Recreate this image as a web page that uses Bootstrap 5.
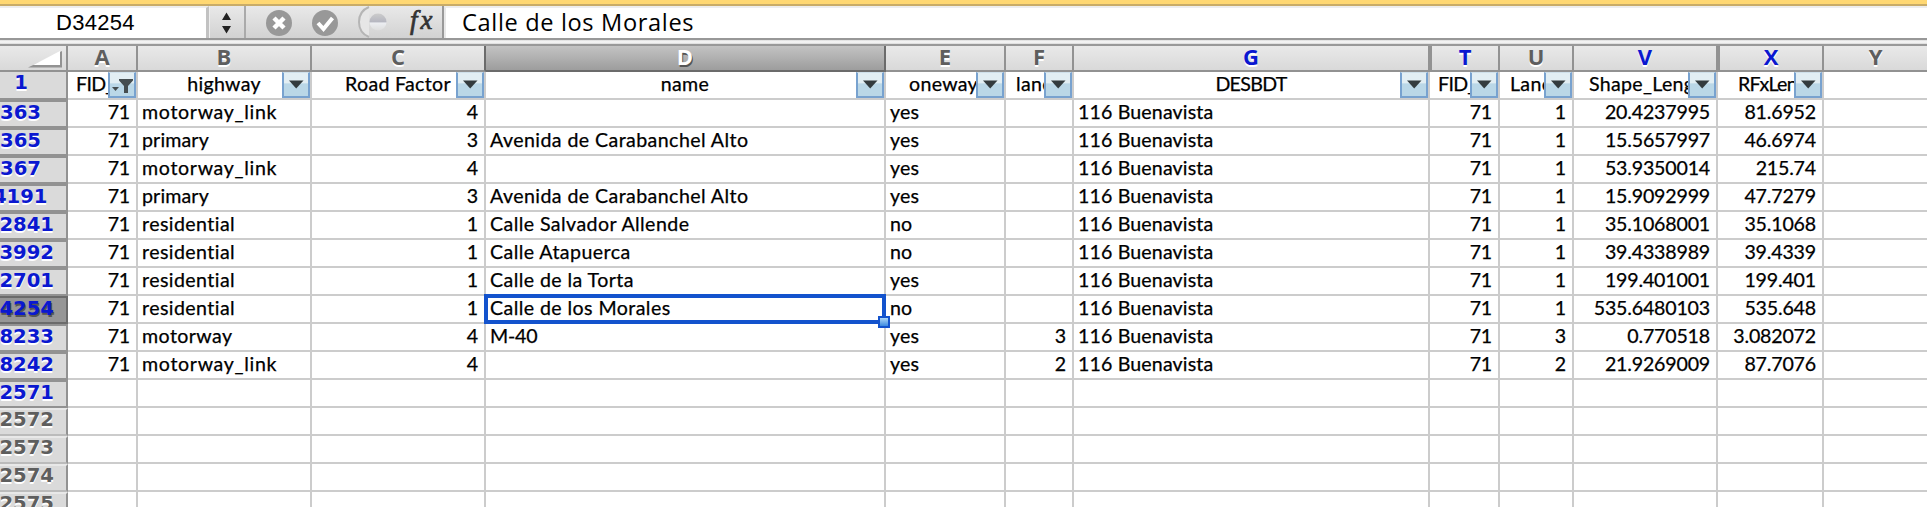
<!DOCTYPE html>
<html lang="en">
<head>
<meta charset="utf-8">
<title>Workbook</title>
<link href="https://cdn.jsdelivr.net/npm/bootstrap@5.3.0/dist/css/bootstrap.min.css" rel="stylesheet">
<style>
  body{width:1927px;height:507px;overflow:hidden;background:#fff;color:#000;font-family:Lato,sans-serif}
  .ribbon-edge{height:6px;background:#ffd873;border-bottom:2px solid #c9ac68}
  .formula-bar{height:34px;border-bottom:2px solid #989898;background:linear-gradient(#e9e9e9,#d2d2d2)}
  .name-box{width:209px;background:#fff;border-top:2px solid #eee;border-right:3px solid #c2c2c2;font:22px/30px "Liberation Sans",sans-serif;letter-spacing:.3px;padding-left:56px}
  .stepper{width:37px;border-right:2px solid #aaa;border-left:1px solid #eee}
  .tools{width:198px;border-right:2px solid #999}
  .formula{background:#fff;border-top:2px solid #eee;border-left:2px solid #e8e8e8;font:23.6px/28px "Open Sans",sans-serif;letter-spacing:.65px;padding-left:16px}
  .splitter{height:6px;background:linear-gradient(#dcdcdc,#fafafa 50%,#d8d8d8);border-bottom:2px solid #999}
  .sheet-row{display:grid;grid-template-columns:68px 70px 174px 174px 400px 120px 68px 356px 70px 74px 144px 106px 1fr;height:28px}
  .letters{height:26px}
  .letters>div{border-right:2px solid #929292;border-bottom:2px solid #929292;background:linear-gradient(#e9e9e9,#d9d9d9);text-align:center;font:bold 22px/20px "Open Sans",sans-serif;color:#5e5e5e;text-shadow:0 1.5px 0 #fff}
  .letters>div:last-child{border-right:0}
  .letters>.current{background:linear-gradient(#c3c3c3,#9d9d9d);color:#fff;text-shadow:1px 1.5px 0 #555;border-color:#6b6b6b}
  .letters>.before-current{border-right-color:#6b6b6b}
  .letters>.filtered,.row-no.filtered{color:#0a18d0}
  .letters>.after-hidden{border-left:2px solid #929292}
  .row-no{background:#dadada;border-right:2px solid #929292;border-bottom:2px solid #929292;font:bold 19.6px/22px "DejaVu Sans",sans-serif;color:#5e5e5e;text-shadow:0 1.5px 0 #fff;overflow:hidden;white-space:nowrap}
  .row-no.folded{border-top:2px solid #929292}
  .row-no.plain{border-top:2px solid #e8e8e8;border-bottom-color:#bbb;line-height:20px}
  .row-no.current{background:#969696;border-color:#6b6b6b;text-shadow:1px 1.5px 0 #555}
  .grid-cell{border-right:2px solid #ccc;border-bottom:2px solid #ccc;font-size:19.6px;line-height:23px;padding:0 6px 0 4px;white-space:nowrap;letter-spacing:-.18px;position:relative;-webkit-text-stroke:.25px #000}
  .grid-cell:last-child{border-right:0}
  .spaced{letter-spacing:.42px}
  .spaced-more{letter-spacing:.68px}
  .spaced-less{letter-spacing:.14px}
  .title-cell{padding:0;text-align:center;overflow:hidden;letter-spacing:.3px}
  .tight{letter-spacing:-.7px}
  .filter-btn{position:absolute;right:0;top:0;width:28px;height:26px;padding:0;border:2px solid #78a2cf;border-top:1px solid #cfe0ea;border-radius:0;background:linear-gradient(#e2eef3 45%,#bad7e7 46%);line-height:0}
  .filter-btn svg{display:block}
  .selection{position:absolute;left:-2px;top:-2px;width:402px;height:30px;border:4px solid #1353cd;z-index:2}
  .selection i{position:absolute;right:-8px;bottom:-8px;width:12px;height:12px;border:2px solid #1353cd;background:linear-gradient(#acd6f6,#3c8be0)}
</style>
</head>
<body>
<div class="ribbon-edge"></div>
<div class="formula-bar d-flex">
  <div class="name-box flex-shrink-0">D34254</div>
  <div class="stepper flex-shrink-0">
    <svg width="34" height="32"><path d="M12 14l4.500-7.500 4.500 7.500zM12 20l4.500 7.500 4.500-7.500z" fill="#222"/></svg>
  </div>
  <div class="tools flex-shrink-0">
    <svg class="d-block" width="196" height="32">
      <defs><linearGradient id="orb" x2="0" y2="1"><stop offset="0" stop-color="#ccc"/><stop offset=".5" stop-color="#b5b6c0"/><stop offset=".55" stop-color="#eceef2"/><stop offset="1" stop-color="#ddd"/></linearGradient></defs>
      <circle cx="33" cy="17" r="13" fill="#989898"/><path d="M28 12l10 10M38 12L28 22" stroke="#fff" stroke-width="4.500"/>
      <circle cx="79" cy="17" r="13" fill="#989898"/><path d="M72 17l5.500 6 9-11" fill="none" stroke="#fff" stroke-width="4"/>
      <path d="M123 1q-10 4-10 15t10 15" fill="#e6e6e6" stroke="#b5b5b5" stroke-width="2"/>
      <circle cx="132" cy="16" r="8.500" fill="url(#orb)"/>
      <text x="164" y="23" font-family="Liberation Serif, serif" font-style="italic" font-size="27" fill="#333" stroke="#333" stroke-width=".7" letter-spacing="3">fx</text>
    </svg>
  </div>
  <div class="formula flex-grow-1">Calle de los Morales</div>
</div>
<div class="splitter"></div>
<main id="sheet"></main>
<script>
const letters = ['A','B','C','D','E','F','G','T','U','V','X','Y'];
// label, left offset of labels that run under their filter button, extra class
const titles = [['FID_',8,'tight'],['highway',0,'spaced'],['Road Factor'],['name'],['oneway',23,'spaced'],['lane',10,'spaced-more'],['DESBDT',0,'tight'],['FID_',8,'tight'],['Lane',10],['Shape_Leng',15,'spaced-more'],['RFxLen',20,'tight']];
const G = '116 Buenavista';
const rows = [
  ['363',71,'motorway_link',4,'','yes','',G,71,1,'20.4237995','81.6952'],
  ['365',71,'primary',3,'Avenida de Carabanchel Alto','yes','',G,71,1,'15.5657997','46.6974'],
  ['367',71,'motorway_link',4,'','yes','',G,71,1,'53.9350014','215.74'],
  ['4191',71,'primary',3,'Avenida de Carabanchel Alto','yes','',G,71,1,'15.9092999','47.7279'],
  ['2841',71,'residential',1,'Calle Salvador Allende','no','',G,71,1,'35.1068001','35.1068'],
  ['3992',71,'residential',1,'Calle Atapuerca','no','',G,71,1,'39.4338989','39.4339'],
  ['2701',71,'residential',1,'Calle de la Torta','yes','',G,71,1,'199.401001','199.401'],
  ['4254',71,'residential',1,'Calle de los Morales','no','',G,71,1,'535.6480103','535.648'],
  ['8233',71,'motorway',4,'M-40','yes',3,G,71,3,'0.770518','3.082072'],
  ['8242',71,'motorway_link',4,'','yes',2,G,71,2,'21.9269009','87.7076'],
  ['2571'],['2572'],['2573'],['2574'],['2575']
];
const textCols = {2: 'spaced', 4: 'spaced', 5: 'spaced-less', 7: 'spaced-less'};
const wordSpacing = {'primary': 'spaced-less', 'motorway_link': 'spaced-more', 'M-40': ''};
const arrow = '<svg width="24" height="23"><path d="M5 7.500h14.500L12.200 15.500z" fill="#333b3e"/></svg>';
const funnel = '<svg width="24" height="23"><path d="M2 14h7l-3.500 4zM9 6h14v1.500l-5 5.500v7h-4v-7L9 7.500z" fill="#454d50"/></svg>';
let html = '<div class="sheet-row letters"><div><svg class="d-block" width="66" height="22"><path d="M28 21.500L62 5v16.500z" fill="#929292"/><path d="M33 19L60 5v14z" fill="#fff"/></svg></div>';
letters.forEach((l) => {
  const c = (l === 'D' ? ' current' : '') + (l === 'C' ? ' before-current' : '') + ('GTVX'.includes(l) ? ' filtered' : '') + ('TX'.includes(l) ? ' after-hidden' : '');
  html += `<div class="${c}">${l}</div>`;
});
html += '</div><div class="sheet-row"><div class="row-no filtered d-flex justify-content-end" style="padding-right:38px"><span>1</span></div>';
titles.forEach(([t, x, c], i) => {
  html += `<div class="grid-cell title-cell ${c || ''}"${x ? ` style="text-align:left;padding-left:${x}px"` : ''}>${t}<button class="btn filter-btn">${i ? arrow : funnel}</button></div>`;
});
html += '<div class="grid-cell"></div></div>';
rows.forEach((r) => {
  const n = r[0], pad = n.length === 3 ? 25 : n === '4191' ? 18.5 : 12;
  const kind = +n > 2571 && +n < 2576 ? 'plain' : 'filtered folded' + (n === '4254' ? ' current' : '');
  html += `<div class="sheet-row"><div class="row-no d-flex justify-content-end ${kind}" style="padding-right:${pad}px"><span>${n}</span></div>`;
  for (let i = 1; i <= 12; i++) {
    const sel = n === '4254' && i === 4 ? '<div class="selection"><i></i></div>' : '';
    html += `<div class="grid-cell ${wordSpacing[r[i]] ?? textCols[i] ?? 'text-end'}">${r[i] ?? ''}${sel}</div>`;
  }
  html += '</div>';
});
document.getElementById('sheet').innerHTML = html;
</script>
<script src="https://cdn.jsdelivr.net/npm/bootstrap@5.3.0/dist/js/bootstrap.bundle.min.js"></script>
</body>
</html>
